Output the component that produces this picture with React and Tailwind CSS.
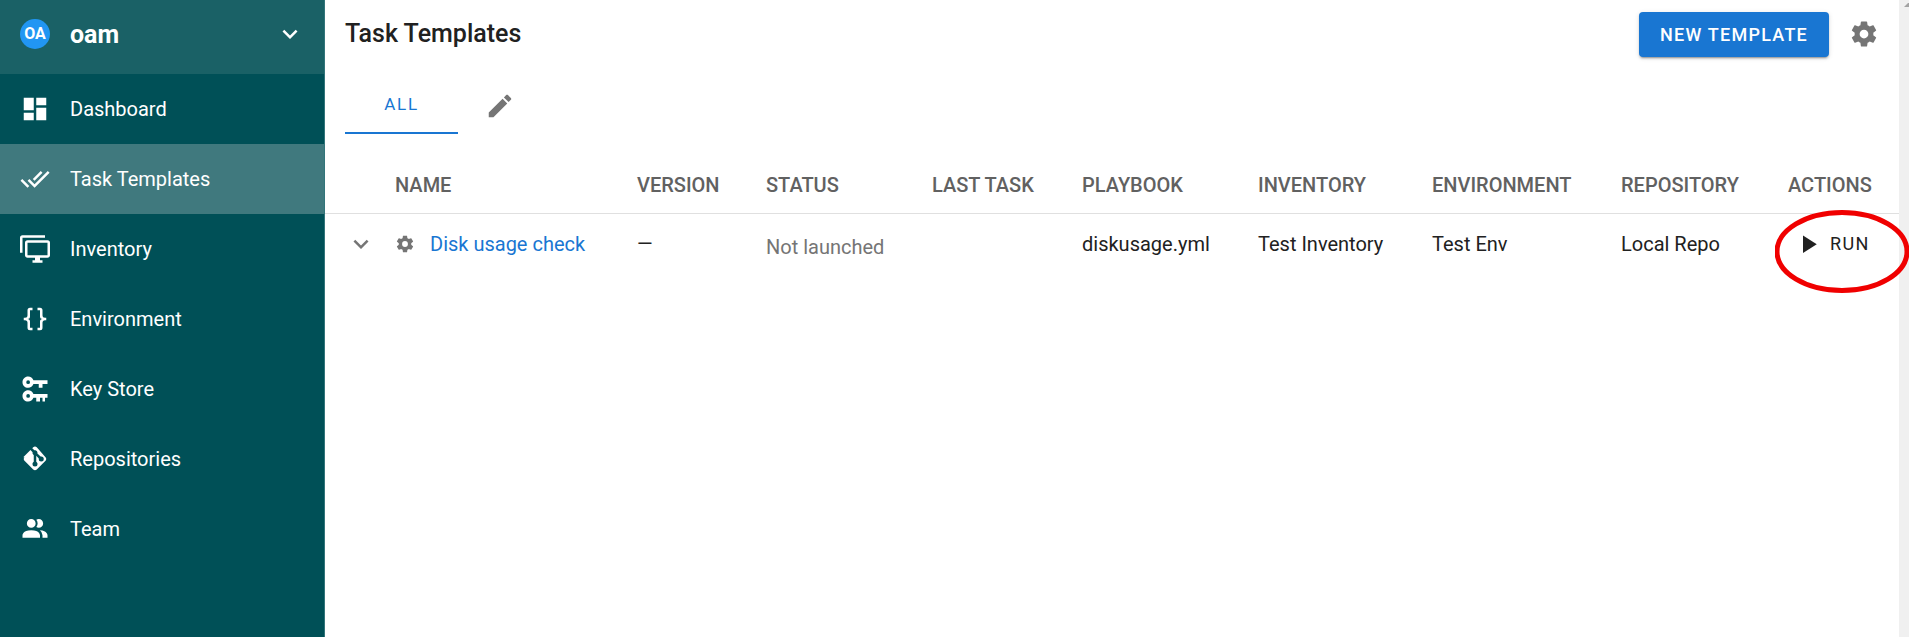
const P = {
  dash: "M13,3V9H21V3M13,21H21V11H13M3,21H11V15H3M3,13H11V3H3V13Z",
  check: "M0.41,13.41L6,19L7.41,17.58L1.83,12M22.24,5.58L11.66,16.17L7.5,12L6.08,13.41L11.66,19L23.66,7M18,7L16.59,5.58L10.24,11.93L11.66,13.34L18,7Z",
  monitor: "M22,17V7H6V17H22M22,5A2,2 0 0,1 24,7V17C24,18.11 23.1,19 22,19H16V21H18V23H10V21H12V19H6C4.89,19 4,18.11 4,17V7A2,2 0 0,1 6,5H22M2,3V15H0V3A2,2 0 0,1 2,1H20V3H2Z",
  braces: "M8,3A2,2 0 0,0 6,5V9A2,2 0 0,1 4,11H3V13H4A2,2 0 0,1 6,15V19A2,2 0 0,0 8,21H10V19H8V14A2,2 0 0,0 6,12A2,2 0 0,0 8,10V5H10V3M16,3A2,2 0 0,1 18,5V9A2,2 0 0,0 20,11H21V13H20A2,2 0 0,0 18,15V19A2,2 0 0,1 16,21H14V19H16V14A2,2 0 0,1 18,12A2,2 0 0,1 16,10V5H14V3H16Z",
  key: "M6.5,2C8.46,2 10.13,3.25 10.74,5H22V8H18V11H15V8H10.74C10.13,9.75 8.46,11 6.5,11C4,11 2,9 2,6.5C2,4 4,2 6.5,2M6.5,5A1.5,1.5 0 0,0 5,6.5A1.5,1.5 0 0,0 6.5,8A1.5,1.5 0 0,0 8,6.5A1.5,1.5 0 0,0 6.5,5M6.5,13C8.46,13 10.13,14.25 10.74,16H22V19H20V22H18V19H16V22H13V19H10.74C10.13,20.75 8.46,22 6.5,22C4,22 2,20 2,17.5C2,15 4,13 6.5,13M6.5,16A1.5,1.5 0 0,0 5,17.5A1.5,1.5 0 0,0 6.5,19A1.5,1.5 0 0,0 8,17.5A1.5,1.5 0 0,0 6.5,16Z",
  git: "M2.6,10.59L8.38,4.8L10.07,6.5C9.83,7.35 10.22,8.28 11,8.73V14.27C10.4,14.61 10,15.26 10,16A2,2 0 0,0 12,18A2,2 0 0,0 14,16C14,15.26 13.6,14.61 13,14.27V9.41L15.07,11.5C15,11.65 15,11.82 15,12A2,2 0 0,0 17,14A2,2 0 0,0 19,12A2,2 0 0,0 17,10C16.82,10 16.65,10 16.5,10.07L13.93,7.5C14.19,6.57 13.71,5.55 12.78,5.16C12.35,5 11.9,4.96 11.5,5.07L9.8,3.38L10.59,2.6C11.37,1.81 12.63,1.81 13.41,2.6L20.4,10.59C21.19,11.37 21.19,12.63 20.4,13.41L13.41,20.4C12.63,21.19 11.37,21.19 10.59,20.4L3.6,13.41C2.81,12.63 2.81,11.37 3.6,10.59Z",
  team: "M16 17V19H2V17S2 13 9 13 16 17 16 17M12.5 7.5A3.5 3.5 0 1 0 9 11A3.5 3.5 0 0 0 12.5 7.5M15.94 13A5.32 5.32 0 0 1 18 17V19H22V17S22 13.37 15.94 13M15 4A3.39 3.39 0 0 0 13.07 4.59A5 5 0 0 1 13.07 10.41A3.39 3.39 0 0 0 15 11A3.5 3.5 0 0 0 15 4Z",
  pencil: "M20.71,7.04C21.1,6.65 21.1,6 20.71,5.63L18.37,3.29C18,2.9 17.35,2.9 16.96,3.29L15.12,5.12L18.87,8.87M3,17.25V21H6.75L17.81,9.93L14.06,6.18L3,17.25Z",
  cog: "M12,15.5A3.5,3.5 0 0,1 8.5,12A3.5,3.5 0 0,1 12,8.5A3.5,3.5 0 0,1 15.5,12A3.5,3.5 0 0,1 12,15.5M19.43,12.97C19.47,12.65 19.5,12.33 19.5,12C19.5,11.67 19.47,11.34 19.43,11L21.54,9.37C21.73,9.22 21.78,8.95 21.66,8.73L19.66,5.27C19.54,5.05 19.27,4.96 19.05,5.05L16.56,6.05C16.04,5.66 15.5,5.32 14.87,5.07L14.5,2.42C14.46,2.18 14.25,2 14,2H10C9.75,2 9.54,2.18 9.5,2.42L9.13,5.07C8.5,5.32 7.96,5.66 7.44,6.05L4.95,5.05C4.73,4.96 4.46,5.05 4.34,5.27L2.34,8.73C2.21,8.95 2.27,9.22 2.46,9.37L4.57,11C4.53,11.34 4.5,11.67 4.5,12C4.5,12.33 4.53,12.65 4.57,12.97L2.46,14.63C2.27,14.78 2.21,15.05 2.34,15.27L4.34,18.73C4.46,18.95 4.73,19.03 4.95,18.95L7.44,17.94C7.96,18.34 8.5,18.68 9.13,18.93L9.5,21.58C9.54,21.82 9.75,22 10,22H14C14.25,22 14.46,21.82 14.5,21.58L14.87,18.93C15.5,18.67 16.04,18.34 16.56,17.94L19.05,18.95C19.27,19.03 19.54,18.95 19.66,18.73L21.66,15.27C21.78,15.05 21.73,14.78 21.54,14.63L19.43,12.97Z",
  play: "M8,5.14V19.14L19,12.14L8,5.14Z",
  down: "M7.41,8.58L12,13.17L16.59,8.58L18,10L12,16L6,10L7.41,8.58Z",
};

function Icon({ d, className }) {
  return (
    <svg viewBox="0 0 24 24" className={className} fill="currentColor" aria-hidden="true">
      <path d={d} />
    </svg>
  );
}

const nav = [
  ["Dashboard", P.dash],
  ["Task Templates", P.check, true],
  ["Inventory", P.monitor],
  ["Environment", P.braces],
  ["Key Store", P.key],
  ["Repositories", P.git],
  ["Team", P.team],
];

const cols = "grid grid-cols-[70px_242px_129px_166px_150px_176px_174px_189px_167px_1fr]";
const heads = ["", "NAME", "VERSION", "STATUS", "LAST TASK", "PLAYBOOK", "INVENTORY", "ENVIRONMENT", "REPOSITORY", "ACTIONS"];

export default function App() {
  return (
    <div className="relative flex h-[637px] w-[1909px] overflow-hidden bg-white font-['Roboto',sans-serif] text-[20px] text-[#212121]">
      <aside className="w-[325px] shrink-0 border-r border-[#33757a] bg-[#005057] text-white">
        <div className="flex h-[74px] items-center bg-[#1a6166] pb-[6px] pl-5 pr-[19px]">
          <div className="flex h-[30px] w-[30px] items-center justify-center rounded-full bg-[#2196f3] text-[16px] font-bold">OA</div>
          <span className="ml-[20px] flex-1 pt-[2px] text-[25px] font-bold">oam</span>
          <Icon d={P.down} className="h-[30px] w-[30px]" />
        </div>
        {nav.map(([label, d, active]) => (
          <div key={label} className={"flex h-[70px] items-center pl-5 " + (active ? "bg-[#40797e]" : "")}>
            <Icon d={d} className="h-[30px] w-[30px]" />
            <span className="ml-[20px]">{label}</span>
          </div>
        ))}
      </aside>

      <main className="mr-[10px] flex min-w-0 flex-1 flex-col">
        <header className="flex h-[68px] items-center pl-5 pr-5">
          <h1 className="flex-1 text-[25px] font-medium">Task Templates</h1>
          <button className="flex h-[45px] w-[190px] items-center justify-center rounded-[4px] bg-[#1976d2] text-[18px] font-medium tracking-[1.25px] text-white shadow-[0_3px_1px_-2px_rgba(0,0,0,0.2),0_2px_2px_0_rgba(0,0,0,0.14),0_1px_5px_0_rgba(0,0,0,0.12)]">
            NEW TEMPLATE
          </button>
          <Icon d={P.cog} className="ml-5 h-[30px] w-[30px] text-[#757575]" />
        </header>

        <div className="flex h-[66px] items-stretch pl-5">
          <div className="flex w-[113px] items-center justify-center border-b-[2px] border-[#1976d2] pt-[10px] text-[17px] tracking-[1.7px] text-[#1976d2]">
            ALL
          </div>
          <div className="ml-[27px] flex items-center pt-[10px]">
            <Icon d={P.pencil} className="h-[30px] w-[30px] text-[#757575]" />
          </div>
        </div>

        <div>
          <div className={cols + " h-[80px] items-end border-b border-[#e0e0e0] pb-[13px] font-medium text-[#616161]"}>
            {heads.map((h, i) => (
              <div key={i}>{h}</div>
            ))}
          </div>
          <div className={cols + " h-[61px] items-center pb-[2px]"}>
            <div className="flex justify-center pl-[1px]">
              <Icon d={P.down} className="h-[30px] w-[30px] text-[#757575]" />
            </div>
            <div className="relative flex items-center">
              <Icon d={P.cog} className="absolute left-0 h-[20px] w-[20px] text-[#757575]" />
              <span className="ml-[35px] text-[#1976d2]">Disk usage check</span>
            </div>
            <div>—</div>
            <div className="pt-[7px] text-[#757575]">Not launched</div>
            <div />
            <div>diskusage.yml</div>
            <div>Test Inventory</div>
            <div>Test Env</div>
            <div>Local Repo</div>
            <div className="flex items-center">
              <Icon d={P.play} className="ml-[5px] h-[30px] w-[30px]" />
              <span className="ml-[7px] text-[18px] tracking-[1.4px]">RUN</span>
            </div>
          </div>
        </div>
      </main>

      <div className="absolute right-0 top-0 h-full w-[10px] bg-[#f0f0f0]">
        <svg className="absolute left-[5px] top-[3px]" width="5" height="4" viewBox="0 0 5 4" fill="#a3a3a3">
          <path d="M4,0L0,4H5V0Z" />
        </svg>
      </div>
      <svg className="pointer-events-none absolute left-[1775px] top-[210px]" width="134" height="83" viewBox="0 0 134 83" fill="none">
        <ellipse cx="67" cy="41.5" rx="65" ry="39" stroke="#f00000" strokeWidth="5" />
      </svg>
    </div>
  );
}
